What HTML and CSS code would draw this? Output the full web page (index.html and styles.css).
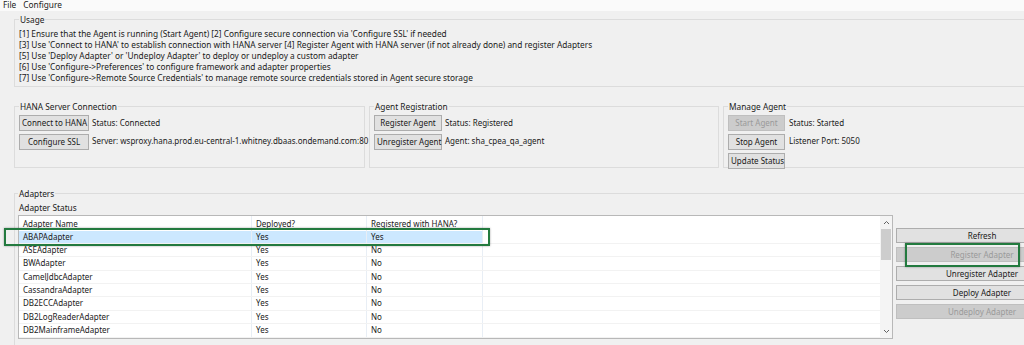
FILE: index.html
```html
<!DOCTYPE html>
<html lang="en">
<head>
    <meta charset="UTF-8">
    <title>Data Provisioning Agent Configuration</title>
    <link rel="stylesheet" href="styles.css">
</head>
<body>
    <div class="menubar">
        <span>File</span>
        <span>Configure</span>
    </div>

    <fieldset class="group usage">
        <legend>Usage</legend>
        <div>[1] Ensure that the Agent is running (Start Agent) [2] Configure secure connection via 'Configure SSL' if needed</div>
        <div>[3] Use 'Connect to HANA' to establish connection with HANA server [4] Register Agent with HANA server (if not already done) and register Adapters</div>
        <div>[5] Use 'Deploy Adapter' or 'Undeploy Adapter' to deploy or undeploy a custom adapter</div>
        <div>[6] Use 'Configure-&gt;Preferences' to configure framework and adapter properties</div>
        <div>[7] Use 'Configure-&gt;Remote Source Credentials' to manage remote source credentials stored in Agent secure storage</div>
    </fieldset>

    <div class="groups">
        <fieldset class="group panel hana">
            <legend>HANA Server Connection</legend>
            <div class="row"><button>Connect to HANA</button><span>Status: Connected</span></div>
            <div class="row top"><button>Configure SSL</button><span>Server: wsproxy.hana.prod.eu-central-1.whitney.dbaas.ondemand.com:80</span></div>
        </fieldset>
        <fieldset class="group panel agent">
            <legend>Agent Registration</legend>
            <div class="row"><button>Register Agent</button><span>Status: Registered</span></div>
            <div class="row top"><button>Unregister Agent</button><span>Agent: sha_cpea_qa_agent</span></div>
        </fieldset>
        <fieldset class="group panel manage">
            <legend>Manage Agent</legend>
            <div class="row"><button disabled>Start Agent</button><span>Status: Started</span></div>
            <div class="row top"><button>Stop Agent</button><span>Listener Port: 5050</span></div>
            <div class="row"><button>Update Status</button></div>
        </fieldset>
    </div>

    <fieldset class="group adapters">
        <legend>Adapters</legend>
        <div class="caption">Adapter Status</div>
        <div class="adapter-body">
            <div class="table-box">
                <div class="table">
                    <div class="tr head">
                        <div class="td">Adapter Name</div>
                        <div class="td">Deployed?</div>
                        <div class="td">Registered with HANA?</div>
                    </div>
                    <div id="rows"></div>
                </div>
                <div class="scrollbar">
                    <svg class="arrow" width="7" height="5" viewBox="0 0 7 5"><path d="M1 4 L3.5 1.5 L6 4" fill="none" stroke="#606060" stroke-width="1"/></svg>
                    <div class="track"><div class="thumb"></div></div>
                    <svg class="arrow" width="7" height="5" viewBox="0 0 7 5"><path d="M1 1 L3.5 3.5 L6 1" fill="none" stroke="#606060" stroke-width="1"/></svg>
                </div>
            </div>
            <div class="side-buttons">
                <button>Refresh</button>
                <button disabled>Register Adapter</button>
                <button>Unregister Adapter</button>
                <button>Deploy Adapter</button>
                <button disabled>Undeploy Adapter</button>
            </div>
        </div>
    </fieldset>

    <div class="mark mark-row"></div>
    <div class="mark mark-button"></div>

    <script>
        const adapters = [
            ['ABAPAdapter', 'Yes', 'Yes'],
            ['ASEAdapter', 'Yes', 'No'],
            ['BWAdapter', 'Yes', 'No'],
            ['CamelJdbcAdapter', 'Yes', 'No'],
            ['CassandraAdapter', 'Yes', 'No'],
            ['DB2ECCAdapter', 'Yes', 'No'],
            ['DB2LogReaderAdapter', 'Yes', 'No'],
            ['DB2MainframeAdapter', 'Yes', 'No']
        ];

        const rows = document.getElementById('rows');
        adapters.forEach((a, i) => {
            const tr = document.createElement('div');
            tr.className = i === 0 ? 'tr selected' : 'tr';
            a.forEach(text => {
                const td = document.createElement('div');
                td.className = 'td';
                td.textContent = text;
                tr.appendChild(td);
            });
            rows.appendChild(tr);
        });
    </script>
</body>
</html>
```

FILE: styles.css
```css
body {
    font-family: 'Noto Sans', 'Open Sans', sans-serif;
    font-size: 8px;
    line-height: 11px;
    color: #1a1a1a;
    background: #f0f0f0;
    margin: 0;
    width: 1024px;
    height: 345px;
    overflow: hidden;
    position: relative;
}
.menubar {
    height: 11px;
    background: #fafafa;
    padding-left: 3px;
    display: flex;
    gap: 7px;
    line-height: 10px;
    font-size: 8.3px;
}
.group {
    margin: 0;
    border: 1px solid #dcdcdc;
    padding: 0 4px 0 4px;
    min-width: 0;
}
.group legend {
    padding: 0 1px;
    line-height: 11px;
    font-size: 8.3px;
}
.usage {
    margin: 2.5px 0 0 14px;
    width: 1100px;
    padding-top: 3px;
    padding-bottom: 3px;
    font-size: 8.3px;
}
.groups {
    display: grid;
    grid-template-columns: 351px 350px 351px;
    gap: 4px;
    margin: 14.5px 0 0 14px;
    width: 1100px;
}
.panel {
    padding-top: 2.5px;
    padding-bottom: 2px;
    display: flex;
    flex-direction: column;
    gap: 3px;
    height: 60px;
}
.row {
    display: flex;
    align-items: center;
    gap: 3px;
    white-space: nowrap;
}
.row.top {
    align-items: flex-start;
}
.row.top span {
    padding-top: 1px;
}
button {
    font-family: inherit;
    font-size: 8px;
    color: #1a1a1a;
    background: #e1e1e1;
    border: 1px solid #adadad;
    height: 16px;
    padding: 0 2px;
    margin: 0;
    white-space: nowrap;
    flex-shrink: 0;
}
button:disabled {
    background: #cccccc;
    border-color: #bfbfbf;
    color: #9a9a9a;
}
.hana button { width: 70px; }
.agent button { width: 68px; }
.manage button { width: 57px; }
.manage .row { gap: 4px; }
.adapters {
    margin: 20.5px 0 0 14px;
    width: 1100px;
    height: 160px;
    padding: 0 3px 3px 3px;
}
.caption {
    margin: 3px 0 1.5px 1px;
    font-size: 8.3px;
}
.adapter-body {
    display: flex;
    gap: 3px;
    align-items: flex-start;
}
.table-box {
    flex-shrink: 0;
    width: 873px;
    height: 122px;
    border: 1px solid #b8b8b8;
    background: #ffffff;
    display: flex;
    overflow: hidden;
}
.table {
    flex: 1;
}
.tr {
    display: grid;
    grid-template-columns: 233px 115px 116px 1fr;
    height: 13.4px;
    border-bottom: 1px solid #f2f2f2;
    box-sizing: border-box;
    line-height: 12.4px;
}
.tr.head {
    height: 15px;
    line-height: 16px;
    border-bottom: none;
}
.td {
    padding-left: 4px;
    border-right: 1px solid #e8eef5;
    white-space: nowrap;
}
.tr.selected .td {
    background: #cce8ff;
}
.scrollbar {
    width: 12px;
    background: #f4f4f4;
    display: flex;
    flex-direction: column;
    align-items: center;
}
.arrow {
    margin: 4px 0;
}
.track {
    flex: 1;
    width: 100%;
}
.thumb {
    margin: 0 1px;
    height: 31px;
    background: #cdcdcd;
}
.side-buttons {
    flex-shrink: 0;
    width: 172px;
    margin-top: 13px;
    display: flex;
    flex-direction: column;
    gap: 4px;
}
.side-buttons button {
    width: 172px;
    height: 15px;
}
.mark {
    position: absolute;
    border: 2px solid #237a3f;
    box-shadow: 0 0 2px rgba(0, 0, 0, 0.35);
    box-sizing: border-box;
}
.mark-row {
    left: 4px;
    top: 228px;
    width: 486px;
    height: 18px;
}
.mark-button {
    left: 905px;
    top: 243px;
    width: 115px;
    height: 24px;
}
```
